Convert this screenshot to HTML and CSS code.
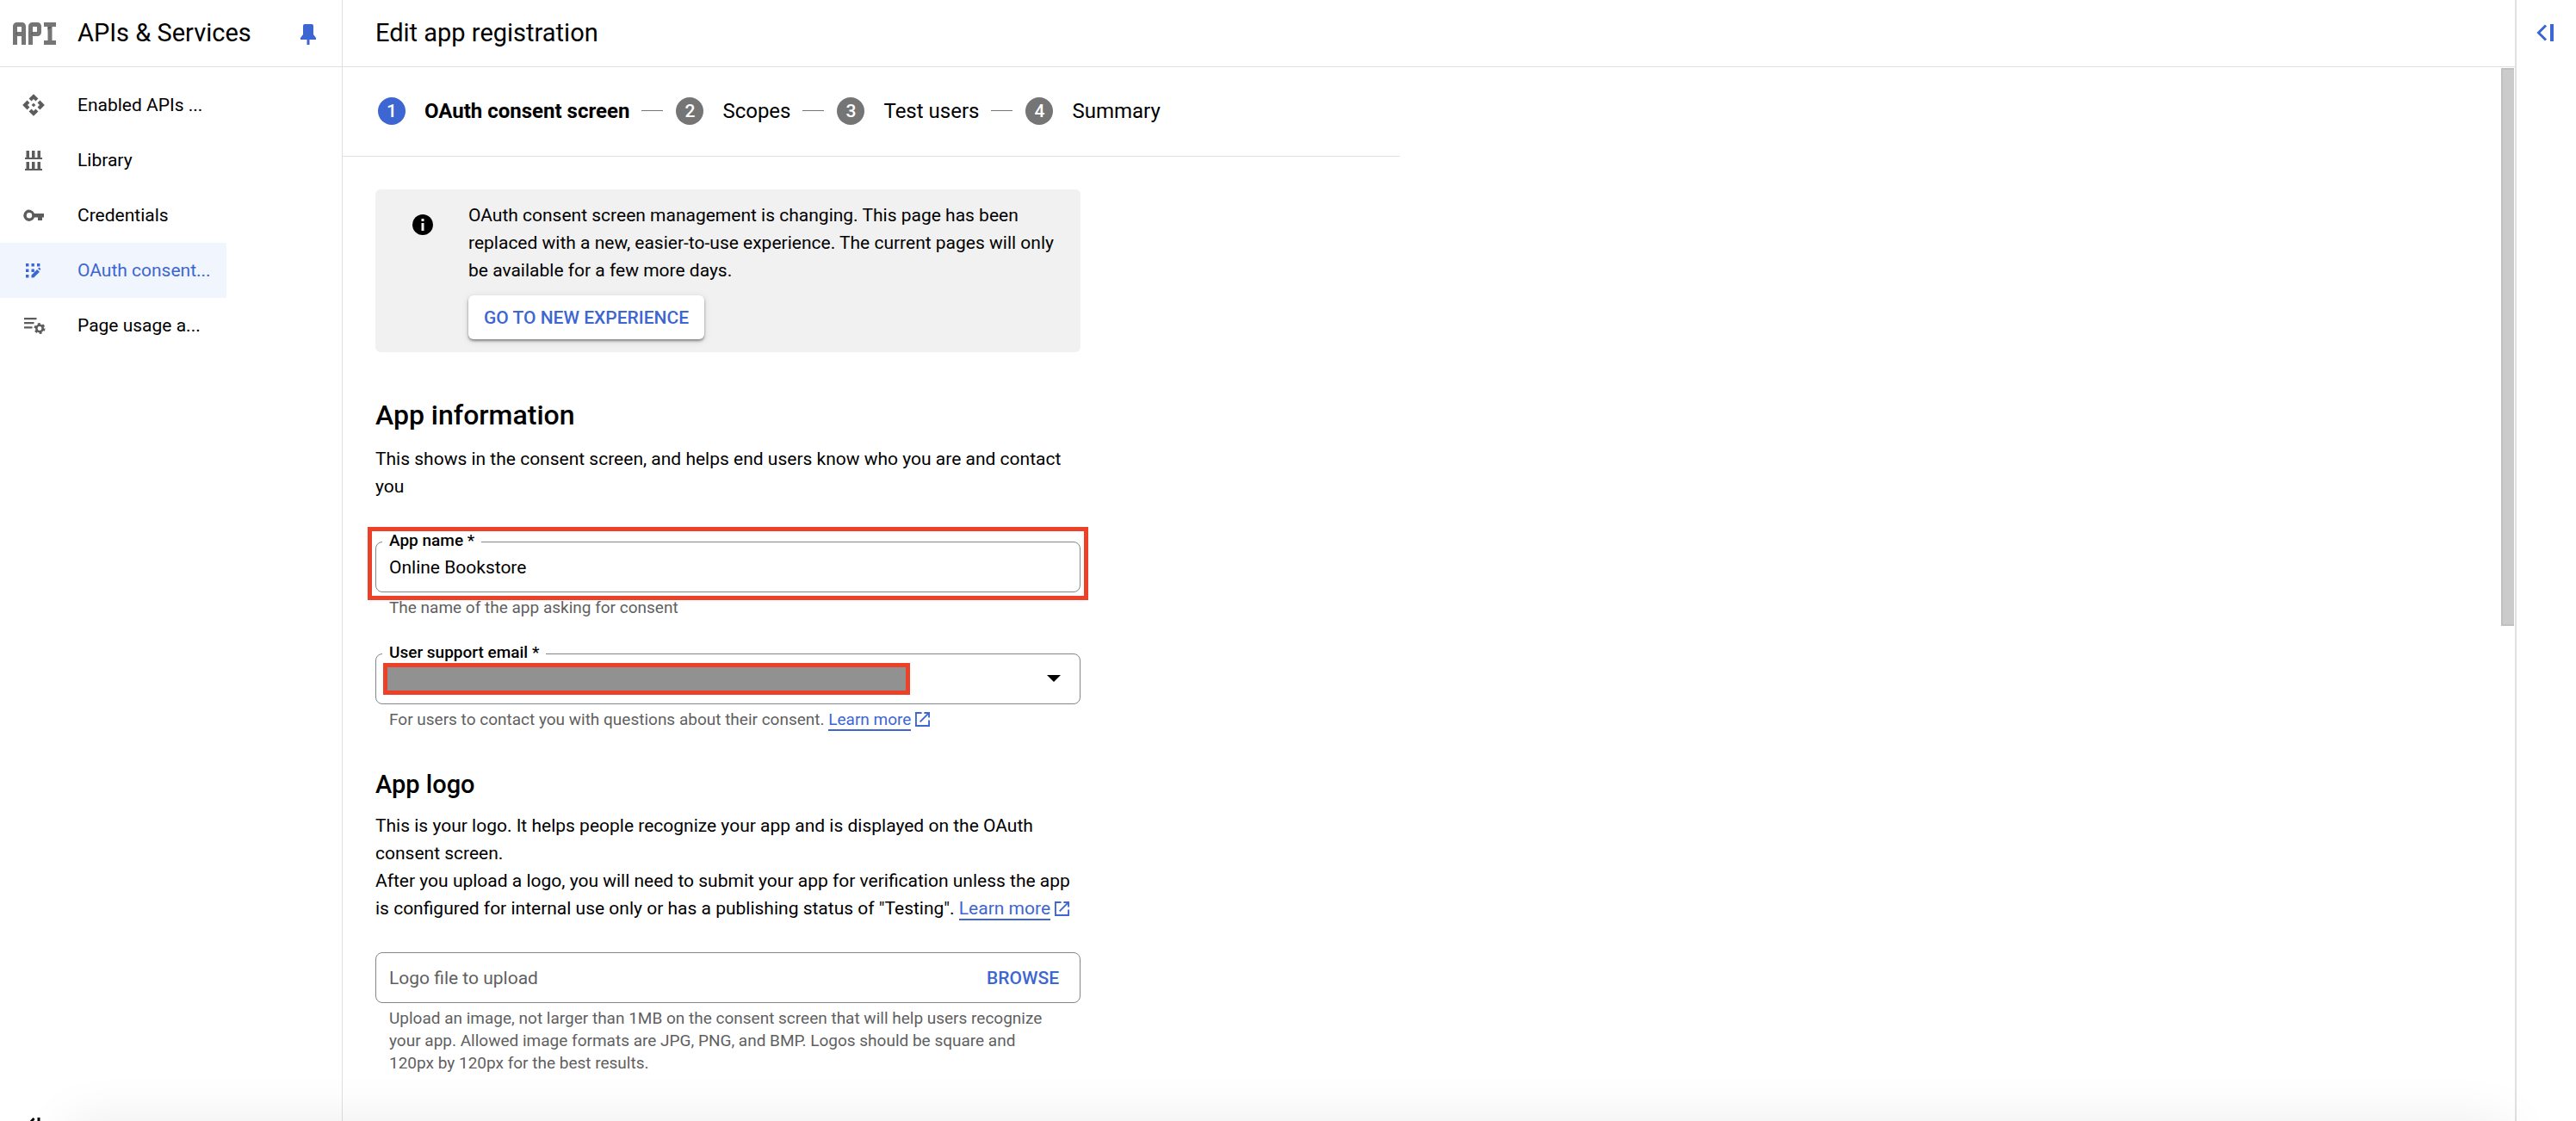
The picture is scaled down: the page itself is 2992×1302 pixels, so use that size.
FILE: index.html
```html
<!DOCTYPE html>
<html lang="en">
<head>
<meta charset="utf-8">
<meta name="viewport" content="width=device-width, initial-scale=1">
<title>Edit app registration</title>
<link rel="stylesheet" href="styles.css">
</head>
<body>
<div class="shell">
  <aside class="sidebar">
    <div class="bar product">
      <svg class="product-logo" viewBox="0 0 50 26" aria-hidden="true">
        <g fill="none" stroke="#757575" stroke-width="5">
          <rect x="2.5" y="2.5" width="10" height="11" rx="2"/>
          <line x1="2.5" y1="10" x2="2.5" y2="26"/>
          <line x1="12.500" y1="10" x2="12.500" y2="26"/>
          <rect x="20.500" y="2.500" width="10" height="11" rx="2"/>
          <line x1="20.500" y1="10" x2="20.500" y2="26"/>
          <line x1="36" y1="2.500" x2="50" y2="2.500"/>
          <line x1="36" y1="23.500" x2="50" y2="23.500"/>
          <line x1="43" y1="3" x2="43" y2="24"/>
        </g>
        <path fill="#5a5a5a" d="M5 11v3H3zM23 11v3h-2zM40.500 5h5l-5 4z"/>
      </svg>
      <span class="title">APIs &amp; Services</span>
      <button class="icon-button pin" aria-label="Unpin menu">
        <svg width="18" height="24" viewBox="0 0 18 24"><path fill="#3d66d2" d="M5 0h8q2 0 2 2v10l3 4v2h-7.500v6h-3v-6H0v-2l3-4V2q0-2 2-2z"/></svg>
      </button>
    </div>
    <nav class="nav" aria-label="APIs and Services">
      <a class="nav-item" href="#">
        <svg class="nav-icon" viewBox="0 0 24 24"><path d="M14 12l-2 2-2-2 2-2zM12 6l2.120 2.120 2.500-2.500L12 1 7.380 5.620l2.500 2.500zM6 12l2.120-2.120-2.500-2.500L1 12l4.620 4.620 2.500-2.500zM18 12l-2.120 2.120 2.500 2.500L23 12l-4.620-4.620-2.500 2.500zM12 18l-2.120-2.120-2.500 2.500L12 23l4.620-4.620-2.500-2.500z"/></svg>
        <span class="nav-text">Enabled APIs ...</span>
      </a>
      <a class="nav-item" href="#">
        <svg class="nav-icon" viewBox="0 0 28 28"><path d="M5.500 3H9v8h3V3h3.500v8h3V3H22v8h2v2H4v-2h1.500zM5.500 16H9v8h3v-8h3.500v8h3v-8H22v8h2v2H4v-2h1.500z"/></svg>
        <span class="nav-text">Library</span>
      </a>
      <a class="nav-item" href="#">
        <svg class="nav-icon" viewBox="0 0 28 28"><path fill-rule="evenodd" d="M15 12A6.600 6.600 0 1 0 15 16.500H19V20h5v-3.500h2V12zM9 11a3.200 3.200 0 1 1 0 6.400 3.200 3.200 0 0 1 0-6.400z"/></svg>
        <span class="nav-text">Credentials</span>
      </a>
      <a class="nav-item selected" href="#" aria-current="page">
        <svg class="nav-icon" viewBox="0 0 28 28"><path d="M5 6h3.400v3.400H5zM11.500 6h3.400v3.400h-3.400zM18 6h3.400v3.400H18zM5 12.500h3.400v3.400H5zM11.500 12.500h3.400v3.400h-3.400zM5 19h3.400v3.400H5zM11.500 22.500v-3l6.500-6.500 3 2.800-6.800 6.700zM19 12l1-1q.500-.500 1 0l1 1q.500.500 0 1l-.8.900z"/></svg>
        <span class="nav-text">OAuth consent...</span>
      </a>
      <a class="nav-item" href="#">
        <svg class="nav-icon" viewBox="0 0 28 28"><path d="M3 5h14.500v2.200H3zM3 10h11.500v2.200H3zM3 15.200h9.500v2.200H3z"/><circle cx="21" cy="17.500" r="3.700" fill="none" stroke="#5c5c5c" stroke-width="2.600"/><circle cx="21" cy="17.500" r="5.400" fill="none" stroke="#5c5c5c" stroke-width="2.200" stroke-dasharray="2.830 2.830"/></svg>
        <span class="nav-text">Page usage a...</span>
      </a>
    </nav>
    <button class="icon-button collapse" aria-label="Collapse menu">
      <svg width="20" height="20" viewBox="0 0 20 20" fill="none" stroke="#000" stroke-width="3"><path d="M9.500 1L1.500 10l8 9M15 0v20"/></svg>
    </button>
  </aside>

  <main class="main">
    <header class="bar page-bar"><h1 class="title">Edit app registration</h1></header>
    <div class="body">
      <div class="content">
        <ol class="stepper">
          <li class="step current"><span class="dot">1</span><span>OAuth consent screen</span></li>
          <li class="step"><span class="dot">2</span><span>Scopes</span></li>
          <li class="step"><span class="dot">3</span><span>Test users</span></li>
          <li class="step"><span class="dot">4</span><span>Summary</span></li>
        </ol>

        <form class="form">
          <section class="notice">
            <svg class="notice-icon" viewBox="0 0 24 24" aria-hidden="true"><circle cx="12" cy="12" r="12"/><path fill="#f1f1f1" d="M10.500 5h3v3h-3zM10.500 10h3v9h-3z"/></svg>
            <div class="notice-body">
              <p>OAuth consent screen management is changing. This page has been replaced with a new, easier-to-use experience. The current pages will only be available for a few more days.</p>
              <button type="button" class="raised">GO TO NEW EXPERIENCE</button>
            </div>
          </section>

          <h2 class="heading">App information</h2>
          <p class="lead">This shows in the consent screen, and helps end users know who you are and contact you</p>

          <div class="field spaced">
            <div class="control">
              <label class="label" for="app-name">App name *</label>
              <input class="input" id="app-name" type="text" value="Online Bookstore">
              <div class="callout"></div>
            </div>
            <p class="hint">The name of the app asking for consent</p>
          </div>

          <div class="field">
            <div class="control">
              <label class="label" for="email">User support email *</label>
              <select class="input" id="email"><option></option></select>
              <svg class="arrow" viewBox="0 0 16 8" aria-hidden="true"><path d="M0 0h16L8 8z"/></svg>
              <div class="redaction"></div>
            </div>
            <p class="hint">For users to contact you with questions about their consent. <a class="link" href="#">Learn more</a> <svg class="external" viewBox="0 0 18 18" aria-hidden="true"><path d="M8 1H1v16h16v-7M11 1h6v6M17 1L6 12"/></svg></p>
          </div>

          <h3 class="subheading">App logo</h3>
          <p class="lead">This is your logo. It helps people recognize your app and is displayed on the OAuth consent screen.<br>After you upload a logo, you will need to submit your app for verification unless the app is configured for internal use only or has a publishing status of "Testing". <a class="link" href="#">Learn more</a> <svg class="external" viewBox="0 0 18 18" aria-hidden="true"><path d="M8 1H1v16h16v-7M11 1h6v6M17 1L6 12"/></svg></p>

          <div class="field">
            <div class="control upload">
              <input class="input" type="text" readonly aria-label="Logo file to upload" placeholder="Logo file to upload">
              <button type="button" class="browse">BROWSE</button>
            </div>
            <p class="hint">Upload an image, not larger than 1MB on the consent screen that will help users recognize your app. Allowed image formats are JPG, PNG, and BMP. Logos should be square and 120px by 120px for the best results.</p>
          </div>
        </form>
      </div>
      <div class="scrollbar"><div class="thumb"></div></div>
    </div>
  </main>

  <aside class="rail">
    <button class="icon-button" aria-label="Show info panel">
      <svg width="22" height="20" viewBox="0 0 22 20" fill="none" stroke="#3d66d2" stroke-width="3"><path d="M11 1.500L2.500 10l8.500 8.500"/><path stroke-width="4" d="M18 0v20"/></svg>
    </button>
  </aside>
</div>
</body>
</html>
```
FILE: styles.css
```css
* {
  box-sizing: border-box;
}

body {
  margin: 0;
  background: #fff;
  color: #000;
  font: 21px/32px Roboto, sans-serif;
}

/* soft shadow rising from the bottom edge of the window */
body::after {
  content: "";
  position: fixed;
  top: 100%;
  left: 80px;
  right: 80px;
  height: 100px;
  box-shadow: 0 0 60px rgba(0, 0, 0, 0.08);
  pointer-events: none;
}

h1, h2, h3, p, ol {
  margin: 0;
  padding: 0;
  font-weight: 400;
}

button, input, select {
  font: inherit;
  color: inherit;
}

button {
  border: 0;
  background: none;
  padding: 0;
  cursor: pointer;
}

.shell {
  display: flex;
  height: 100vh;
  overflow: hidden;
}

.icon-button {
  display: flex;
}

.bar {
  display: flex;
  align-items: center;
  flex: none;
  height: 78px;
  border-bottom: 1px solid #e0e0e0;
}

.title {
  padding-bottom: 2px;
  font-size: 29px;
  line-height: 40px;
}

/* Sidebar */
.sidebar {
  display: flex;
  flex-direction: column;
  flex: none;
  width: 398px;
  border-right: 1px solid #e0e0e0;
}

.product {
  padding: 0 30px 0 15px;
}

.product-logo {
  width: 50px;
  height: 26px;
  margin-right: 25px;
}

.pin {
  margin-left: auto;
  padding-top: 2px;
}

.nav {
  padding-top: 12px;
}

.nav-item {
  display: flex;
  align-items: center;
  gap: 37px;
  width: 263px;
  height: 64px;
  padding-left: 25px;
  color: inherit;
  text-decoration: none;
}

.nav-icon {
  flex: none;
  width: 28px;
  height: 28px;
  fill: #5c5c5c;
}

.nav-text {
  white-space: nowrap;
}

.selected {
  background: #f0f5fe;
  color: #3d66d2;
}

.selected .nav-icon {
  fill: #3d66d2;
}

.collapse {
  margin: auto 0 -16px 30px;
}

/* Main column */
.main {
  display: flex;
  flex-direction: column;
  flex: 1;
  min-width: 0;
}

.page-bar {
  padding-left: 38px;
}

.body {
  display: flex;
  flex: 1;
  min-height: 0;
  justify-content: space-between;
}

.content {
  flex: 0 1 1228px;
  overflow: hidden;
}

.scrollbar {
  flex: none;
  width: 16px;
  padding-top: 1px;
}

.thumb {
  height: 53%;
  margin-right: 1px;
  background: #cbcbcb;
  border: 2px solid #c0c0c0;
  border-right: 0;
}

.stepper {
  display: flex;
  align-items: center;
  height: 104px;
  padding: 0 0 2px 41px;
  border-bottom: 1px solid #e0e0e0;
  list-style: none;
  font-size: 24px;
}

.step {
  display: flex;
  align-items: center;
  gap: 22px;
  white-space: nowrap;
}

.step + .step::before {
  content: "";
  width: 25px;
  height: 1px;
  margin: 0 -7px 0 14px;
  background: #757575;
}

.current {
  font-weight: 700;
}

.dot {
  width: 32px;
  height: 32px;
  border-radius: 50%;
  background: #757575;
  color: #fff;
  font-size: 21px;
  font-weight: 500;
  text-align: center;
}

.current .dot {
  background: #3d66d2;
}

/* Form */
.form {
  max-width: 857px;
  padding: 38px 0 0 38px;
}

.notice {
  display: flex;
  padding: 14px 30px 15px 43px;
  border-radius: 6px;
  background: #f1f1f1;
}

.notice-icon {
  flex: none;
  width: 24px;
  height: 24px;
  margin: 15px 41px 0 0;
}

.raised {
  height: 51px;
  margin-top: 13px;
  padding: 0 18px;
  border-radius: 6px;
  background: #fff;
  box-shadow: 0 2px 3px rgba(0, 0, 0, 0.4), 0 2px 8px rgba(0, 0, 0, 0.12);
  color: #3d66d2;
  font-weight: 500;
}

.heading {
  margin-top: 53px;
  font-size: 32px;
  line-height: 40px;
  font-weight: 500;
}

.subheading {
  margin-top: 42px;
  font-size: 29px;
  line-height: 40px;
  font-weight: 500;
}

.heading + .lead {
  margin-top: 15px;
}

.subheading + .lead {
  margin-top: 12px;
}

.field {
  margin-top: 40px;
}

.lead + .field {
  margin-top: 35px;
}

.lead + .spaced {
  margin-top: 48px;
}

.control {
  position: relative;
}

.input {
  display: block;
  width: 100%;
  height: 59px;
  padding: 0 15px;
  border: 1px solid #80868b;
  border-radius: 8px;
  background: #fff;
  appearance: none;
}

.input::placeholder {
  color: #5f5f5f;
  opacity: 1;
}

.label {
  position: absolute;
  top: -14px;
  left: 8px;
  padding: 0 8px;
  background: #fff;
  font-size: 19px;
  line-height: 26px;
  font-weight: 500;
}

.arrow {
  position: absolute;
  top: 25px;
  right: 23px;
  width: 16px;
  height: 8px;
}

.callout {
  position: absolute;
  inset: -17px -9px -9px;
  border: 5px solid #ec4128;
  pointer-events: none;
}

.redaction {
  position: absolute;
  top: 11px;
  left: 9px;
  width: 612px;
  height: 37px;
  border: 5px solid #ec4128;
  background: #919191;
}

.hint {
  margin-top: 5px;
  padding: 0 30px 0 16px;
  color: #5f5f5f;
  font-size: 19px;
  line-height: 26px;
}

.link {
  border-bottom: 2px solid #3d66d2;
  color: #3d66d2;
  text-decoration: none;
}

.external {
  width: 17px;
  height: 17px;
  vertical-align: -2px;
  fill: none;
  stroke: #3d66d2;
  stroke-width: 2;
}

.upload {
  display: flex;
  align-items: center;
}

.browse {
  position: absolute;
  right: 25px;
  color: #3d66d2;
  font-weight: 500;
}

/* Right rail */
.rail {
  flex: none;
  width: 71px;
  padding: 28px 0 0 23px;
  border-left: 2px solid #e0e0e0;
}
```
